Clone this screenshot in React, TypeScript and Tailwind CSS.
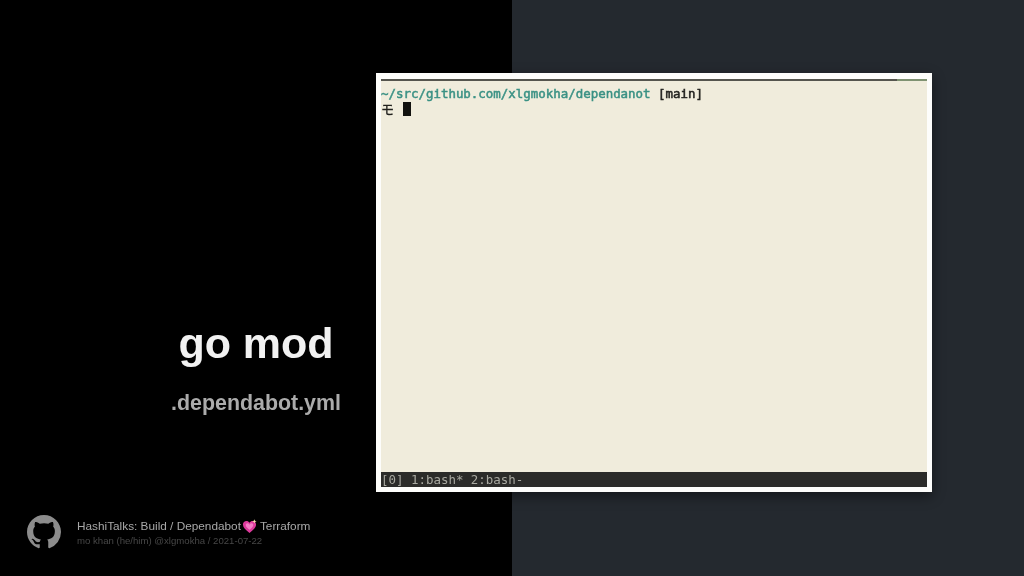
export default function App() {
  return (
    <div className="relative flex h-[576px] w-[1024px] overflow-hidden bg-black font-['Liberation_Sans',sans-serif]">
      <div className="flex h-full w-[512px] flex-col bg-black">
        <div className="flex flex-1 flex-col items-center pt-[317px]">
          <h1 className="text-[43px] leading-[52px] font-bold text-[#f2f2f2] blur-[0.3px]">go mod</h1>
          <p className="mt-[21px] text-[21.4px] leading-[26px] font-bold text-[#ababab] blur-[0.3px]">.dependabot.yml</p>
        </div>
        <div className="flex items-center gap-4 pb-[27px] pl-[27px]">
          <svg viewBox="0 0 16 16" className="h-[34px] w-[34px]" fill="#8c8c8c">
            <path d="M8 0C3.58 0 0 3.58 0 8c0 3.54 2.29 6.53 5.47 7.59.4.07.55-.17.55-.38 0-.19-.01-.82-.01-1.49-2.01.37-2.53-.49-2.69-.94-.09-.23-.48-.94-.82-1.13-.28-.15-.68-.52-.01-.53.63-.01 1.08.58 1.23.82.72 1.21 1.87.87 2.33.66.07-.52.28-.87.51-1.07-1.78-.2-3.64-.89-3.64-3.95 0-.87.31-1.59.82-2.15-.08-.2-.36-1.02.08-2.12 0 0 .67-.21 2.2.82.64-.18 1.32-.27 2-.27s1.36.09 2 .27c1.53-1.04 2.2-.82 2.2-.82.44 1.1.16 1.92.08 2.12.51.56.82 1.27.82 2.15 0 3.07-1.87 3.75-3.65 3.95.29.25.54.73.54 1.48 0 1.07-.01 1.93-.01 2.2 0 .21.15.46.55.38A8.01 8.01 0 0 0 16 8c0-4.42-3.58-8-8-8z" />
          </svg>
          <div className="flex flex-col pt-[1px] blur-[0.3px]">
            <div className="flex items-center text-[11.8px] leading-[16px] text-[#a8a8a8]">
              <span>HashiTalks: Build / Dependabot</span>
              <svg viewBox="0 0 16 16" className="mr-[3px] ml-[1px] h-[15px] w-[15px]">
                <path d="M8 14.8C4 11.7 1 9 1 5.8 1 3.6 2.8 2.1 4.7 2.1c1.4 0 2.5.7 3.3 2 .8-1.3 1.9-2 3.3-2 1.9 0 3.7 1.5 3.7 3.7 0 3.2-3 5.9-7 9z" fill="#dd3a9c" />
                <path d="M8 11.5C5.5 9.5 4 8 4 6.3c0-1 .8-1.8 1.7-1.8.9 0 1.7.5 2.3 1.5.6-1 1.4-1.5 2.3-1.5.9 0 1.7.8 1.7 1.8C12 8 10.5 9.5 8 11.5z" fill="#f47cc4" />
                <path d="M13.2 0.2l.6 1.7 1.7.6-1.7.6-.6 1.7-.6-1.7-1.7-.6 1.7-.6z" fill="#f7dfa8" />
              </svg>
              <span>Terraform</span>
            </div>
            <div className="text-[9.6px] leading-[13px] text-[#474747]">mo khan (he/him) @xlgmokha / 2021-07-22</div>
          </div>
        </div>
      </div>
      <div className="h-full flex-1 bg-[#24292f]" />

      <div className="absolute top-[73px] left-[376px] flex h-[419px] w-[556px] flex-col border-x-[5px] border-t-[6px] border-b-[5px] border-[#fdfdfb] bg-[#f0ecdc] font-['DejaVu_Sans_Mono',monospace] shadow-[0_4px_12px_rgba(0,0,0,0.45)]">
        <div className="flex h-[2px] shrink-0">
          <div className="w-[516px] bg-[#55554e]" />
          <div className="flex-1 bg-[#7f9272]" />
        </div>
        <div className="flex-1 pt-[5px] text-[12.45px] leading-[15px]">
          <div className="whitespace-pre blur-[0.3px] [-webkit-text-stroke:0.5px_currentColor]">
            <span className="text-[#3a9184]">~/src/github.com/xlgmokha/dependanot</span>
            <span className="text-[#22221f]"> [main]</span>
          </div>
          <div className="flex items-center text-[#22221f]">
            <span className="w-[22px] font-['Noto_Sans_CJK_JP',sans-serif] text-[13px] blur-[0.3px] [-webkit-text-stroke:0.3px_currentColor]">モ</span>
            <span className="h-[14px] w-[8px] bg-[#12120f]" />
          </div>
        </div>
        <div className="flex h-[15px] shrink-0 items-center bg-[#2b2b29] text-[12.45px] leading-[15px] whitespace-pre text-[#a9a9a1]">
          <span className="blur-[0.3px]">[0] 1:bash* 2:bash-</span>
        </div>
      </div>
    </div>
  );
}
